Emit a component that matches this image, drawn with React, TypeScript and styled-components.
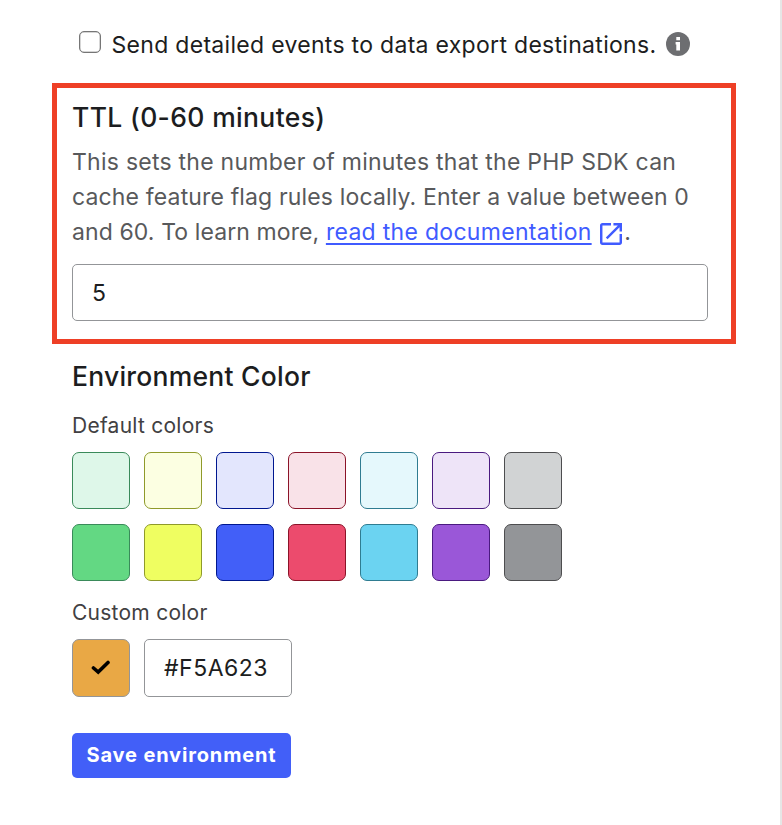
import React from "react";
import styled, { createGlobalStyle } from "styled-components";

const GlobalStyle = createGlobalStyle`
  * { box-sizing: border-box; }
  body { margin: 0; background: #ffffff; font-family: Inter, sans-serif; }
`;

const Panel = styled.main`
  width: 782px;
  height: 825px;
  padding: 27px 0 0 52px;
  border-right: 2px solid #e6e6e6;
  background: #ffffff;
  overflow: hidden;
`;

const OptionRow = styled.label`
  display: flex;
  align-items: center;
  height: 36px;
  padding-left: 27px;
`;

const Checkbox = styled.input`
  appearance: none;
  flex: none;
  width: 22px;
  height: 22px;
  margin: 0 10.5px 6px 0;
  border: 1.5px solid #767676;
  border-radius: 5px;
  background: #ffffff;
  box-shadow: inset 0 0 0 0.5px #76767699;
`;

const OptionText = styled.span`
  color: #1c1d20;
  font-size: 23px;
  letter-spacing: 0.3px;
  line-height: 36px;
  white-space: nowrap;
`;

const InfoIcon = styled.svg`
  flex: none;
  width: 24px;
  height: 24px;
  margin: 0 0 2px 9.5px;
`;

const HighlightedSection = styled.section`
  width: 684px;
  height: 261px;
  margin-top: 20px;
  padding: 12px 15px 0;
  border: 5px solid #ee3f26;
`;

const Heading = styled.h2<{ $spacing?: number }>`
  margin: 0;
  color: #1c1d20;
  font-size: 26.5px;
  font-weight: 500;
  letter-spacing: ${(p) => p.$spacing ?? 0.35}px;
  line-height: 34px;
  white-space: nowrap;
`;

const Description = styled.p`
  margin: 11px 0 14px;
  color: #58595b;
  font-size: 23px;
  line-height: 35px;
  white-space: nowrap;
`;

const Phrase = styled.span<{ $spacing: number }>`
  letter-spacing: ${(p) => p.$spacing}px;
`;

const DocLink = styled.a`
  color: #405bff;
  letter-spacing: 0.3px;
  text-decoration: underline;
  text-decoration-thickness: 2px;
  text-underline-offset: 3px;
`;

const ExternalIcon = styled.svg`
  width: 22px;
  height: 22px;
  margin: 0 2.5px 0 8px;
  vertical-align: -5px;
`;

const TextField = styled.input<{ $width: number; $height: number }>`
  display: block;
  width: ${(p) => p.$width}px;
  height: ${(p) => p.$height}px;
  padding: 0 19px;
  border: 1px solid #939598;
  border-radius: 5px;
  outline: none;
  background: #ffffff;
  color: #1c1d20;
  font-family: inherit;
  font-size: 23px;
  letter-spacing: 0.5px;
`;

const ColorSection = styled.section`
  padding: 15px 0 0 20px;
`;

const Label = styled.div<{ $top: number }>`
  margin: ${(p) => p.$top}px 0 11px;
  color: #414042;
  font-size: 21px;
  letter-spacing: 0.25px;
  line-height: 30px;
`;

const SwatchGrid = styled.div`
  display: grid;
  grid-template-columns: repeat(7, 58px);
  gap: 15px 14px;
`;

const Swatch = styled.button<{ $fill: string; $edge: string; $height?: number }>`
  display: flex;
  align-items: center;
  justify-content: center;
  width: 58px;
  height: ${(p) => p.$height ?? 57}px;
  padding: 0;
  border: 1px solid ${(p) => p.$edge};
  border-radius: 7px;
  background: ${(p) => p.$fill};
`;

const CustomRow = styled.div`
  display: flex;
  gap: 14px;
`;

const SaveButton = styled.button`
  width: 219px;
  height: 45px;
  margin-top: 36px;
  padding: 0 0 1px;
  border: 0;
  border-radius: 5px;
  background: #425ff8;
  color: #ffffff;
  font-family: inherit;
  font-size: 20px;
  font-weight: 700;
  letter-spacing: 0.85px;
  white-space: nowrap;
`;

const swatches = [
  ["#def7e9", "#3a8a5a"],
  ["#fcffe2", "#8f9a2a"],
  ["#e3e6fd", "#00178f"],
  ["#f9e2e8", "#8b1328"],
  ["#e5f8fc", "#2f7c91"],
  ["#eee4f8", "#4a1a80"],
  ["#d1d3d4", "#4d4d4f"],
  ["#63d883", "#3a8a5a"],
  ["#effe61", "#8f9a2a"],
  ["#425ff8", "#00178f"],
  ["#ec4b6d", "#8b1328"],
  ["#6bd3f1", "#2f7c91"],
  ["#9a57d8", "#4a1a80"],
  ["#939598", "#4d4d4f"],
];

export default function App() {
  return (
    <>
      <GlobalStyle />
      <Panel>
        <OptionRow>
          <Checkbox type="checkbox" />
          <OptionText>Send detailed events to data export destinations.</OptionText>
          <InfoIcon viewBox="0 0 24 24">
            <circle cx="12" cy="12" r="12" fill="#6d6e71" />
            <path d="M10.3 5h3.7v3.3h-3.7zM9.6 10h4.4v8.6h-3.7v-6.2h-.7z" fill="#fff" />
          </InfoIcon>
        </OptionRow>
        <HighlightedSection>
          <Heading>TTL (0-60 minutes)</Heading>
          <Description>
            <Phrase $spacing={0.25}>This sets the number of minutes that the PHP SDK can</Phrase>
            <br />
            <Phrase $spacing={0.15}>cache feature flag rules locally. Enter a value between 0</Phrase>
            <br />
            <Phrase $spacing={0.1}>and 60. To learn more, </Phrase>
            <DocLink href="#">read the documentation</DocLink>
            <ExternalIcon viewBox="3 3 18 18" fill="#405bff">
              <path d="M19 19H5V5h7V3H5c-1.11 0-2 .9-2 2v14c0 1.1.89 2 2 2h14c1.1 0 2-.9 2-2v-7h-2v7zM14 3v2h3.59l-9.83 9.83 1.41 1.41L19 6.41V10h2V3h-7z" />
            </ExternalIcon>
            .
          </Description>
          <TextField $width={636} $height={57} defaultValue="5" />
        </HighlightedSection>
        <ColorSection>
          <Heading $spacing={0.24}>Environment Color</Heading>
          <Label $top={18}>Default colors</Label>
          <SwatchGrid>
            {swatches.map(([fill, edge]) => (
              <Swatch key={fill} $fill={fill} $edge={edge} />
            ))}
          </SwatchGrid>
          <Label $top={17}>Custom color</Label>
          <CustomRow>
            <Swatch $fill="#e9a845" $edge="#939598" $height={58}>
              <svg width="20" height="16" viewBox="0 0 20 16" fill="none">
                <path d="M2.5 8L7.2 12L17 2.5" stroke="#000" strokeWidth="3.6" strokeLinecap="round" />
              </svg>
            </Swatch>
            <TextField $width={148} $height={58} defaultValue="#F5A623" />
          </CustomRow>
          <SaveButton>Save environment</SaveButton>
        </ColorSection>
      </Panel>
    </>
  );
}
